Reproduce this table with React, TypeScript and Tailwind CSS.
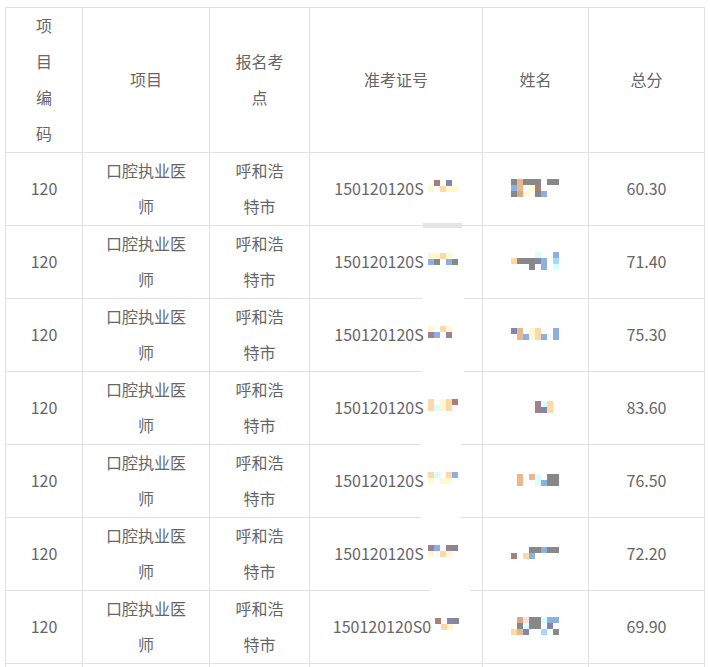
import React from "react";

const COLORS: Record<string, string> = {
  g: "bg-[#888888]",
  t: "bg-[#e8b890]",
  T: "bg-[#d4a888]",
  b: "bg-[#8cb0e0]",
  B: "bg-[#8088b0]",
  y: "bg-[#fff8d0]",
  o: "bg-[#ffd8a8]",
  c: "bg-[#d8ffff]",
  C: "bg-[#a8d8f8]",
  r: "bg-[#a88078]",
  p: "bg-[#a08090]",
  P: "bg-[#f8e0e0]",
  ".": "bg-transparent",
};

function Mosaic({ rows, className = "" }: { rows: string[]; className?: string }) {
  return (
    <div className={"flex flex-col " + className}>
      {rows.map((row, i) => (
        <div key={i} className="flex">
          {row.split("").map((ch, j) => (
            <div key={j} className={"w-[6px] h-[6px] " + (COLORS[ch] || "bg-transparent")} />
          ))}
        </div>
      ))}
    </div>
  );
}

type Row = {
  score: string;
  idExtra: string;
  idMosaic: string[];
  nameMosaic: string[];
};

const rows: Row[] = [
  { score: "60.30", idExtra: "", idMosaic: [".r.B.", "y.oyy"], nameMosaic: ["gtggg.gg", "bt.yr...", "gTy.gb.."] },
  { score: "71.40", idExtra: "", idMosaic: ["yyoy.", "bg.bg"], nameMosaic: ["....c..b", "ogggBb.C", "...g.b.c"] },
  { score: "75.30", idExtra: "", idMosaic: ["y.oy.", "pb.p."], nameMosaic: ["Bt.yo..b", ".tbyob.b"] },
  { score: "83.60", idExtra: "", idMosaic: ["o.yor", "ocyo."], nameMosaic: ["....pco.", "....pBo."] },
  { score: "76.50", idExtra: "", idMosaic: ["oc.ob", "y.yy."], nameMosaic: [".t.tc.gg", ".t..cbgg"] },
  { score: "72.20", idExtra: "", idMosaic: ["pb.pg", "y.oy."], nameMosaic: ["...ggbgg", "r.ob...."] },
  { score: "69.90", idExtra: "0", idMosaic: ["r.Bg", ".oy."], nameMosaic: [".TPggcbb", ".gcgg.B.", "otB..C.g"] },
];

const cell =
  "border-r border-b border-[#e2e2e2] flex flex-col items-center justify-center text-center pb-[2px]";

export default function App() {
  return (
    <div
      className="w-[710px] h-[667px] overflow-hidden bg-white pt-[7px] pl-[5px] text-[16px] leading-[36px] text-[#666666]"
      style={{ fontFamily: '"Noto Sans CJK SC", "Noto Sans", sans-serif' }}
    >
      <div className="relative grid grid-cols-[77px_127px_100px_173px_106px_116px] w-[700px] border-l border-t border-[#e2e2e2]">
        {/* header */}
        <div className={cell + " h-[145px]"}>
          <div>项</div>
          <div>目</div>
          <div>编</div>
          <div>码</div>
        </div>
        <div className={cell + " h-[145px]"}>
          <div>项目</div>
        </div>
        <div className={cell + " h-[145px]"}>
          <div>报名考</div>
          <div>点</div>
        </div>
        <div className={cell + " h-[145px]"}>
          <div>准考证号</div>
        </div>
        <div className={cell + " h-[145px]"}>
          <div>姓名</div>
        </div>
        <div className={cell + " h-[145px]"}>
          <div>总分</div>
        </div>

        {rows.map((r, i) => (
          <React.Fragment key={i}>
            <div className={cell + " h-[73px]"}>
              <div>120</div>
            </div>
            <div className={cell + " h-[73px]"}>
              <div>口腔执业医</div>
              <div>师</div>
            </div>
            <div className={cell + " h-[73px]"}>
              <div>呼和浩</div>
              <div>特市</div>
            </div>
            <div className={cell + " h-[73px]"}>
              <div className="flex items-center">
                <span>150120120S{r.idExtra}</span>
                <Mosaic rows={r.idMosaic} className="mb-[5px] ml-[4px]" />
              </div>
            </div>
            <div className={cell + " h-[73px]"}>
              <Mosaic rows={r.nameMosaic} className="ml-[-1px]" />
            </div>
            <div className={cell + " h-[73px]"}>
              <div>{r.score}</div>
            </div>
          </React.Fragment>
        ))}

        {/* partially visible next row */}
        <div className={cell + " h-[73px]"} />
        <div className={cell + " h-[73px]"} />
        <div className={cell + " h-[73px]"} />
        <div className={cell + " h-[73px]"} />
        <div className={cell + " h-[73px]"} />
        <div className={cell + " h-[73px]"} />

        {/* smudges over the ID column borders */}
        <div className="absolute left-[417px] top-[215px] w-[39px] h-[5px] bg-[#e4e4e4]" />
        <div className="absolute left-[416px] top-[290px] w-[42px] h-[1px] bg-white" />
        <div className="absolute left-[416px] top-[363px] w-[42px] h-[1px] bg-white" />
        <div className="absolute left-[415px] top-[436px] w-[40px] h-[1px] bg-white" />
        <div className="absolute left-[415px] top-[509px] w-[40px] h-[1px] bg-white" />
        <div className="absolute left-[424px] top-[582px] w-[40px] h-[1px] bg-white" />
      </div>
    </div>
  );
}
